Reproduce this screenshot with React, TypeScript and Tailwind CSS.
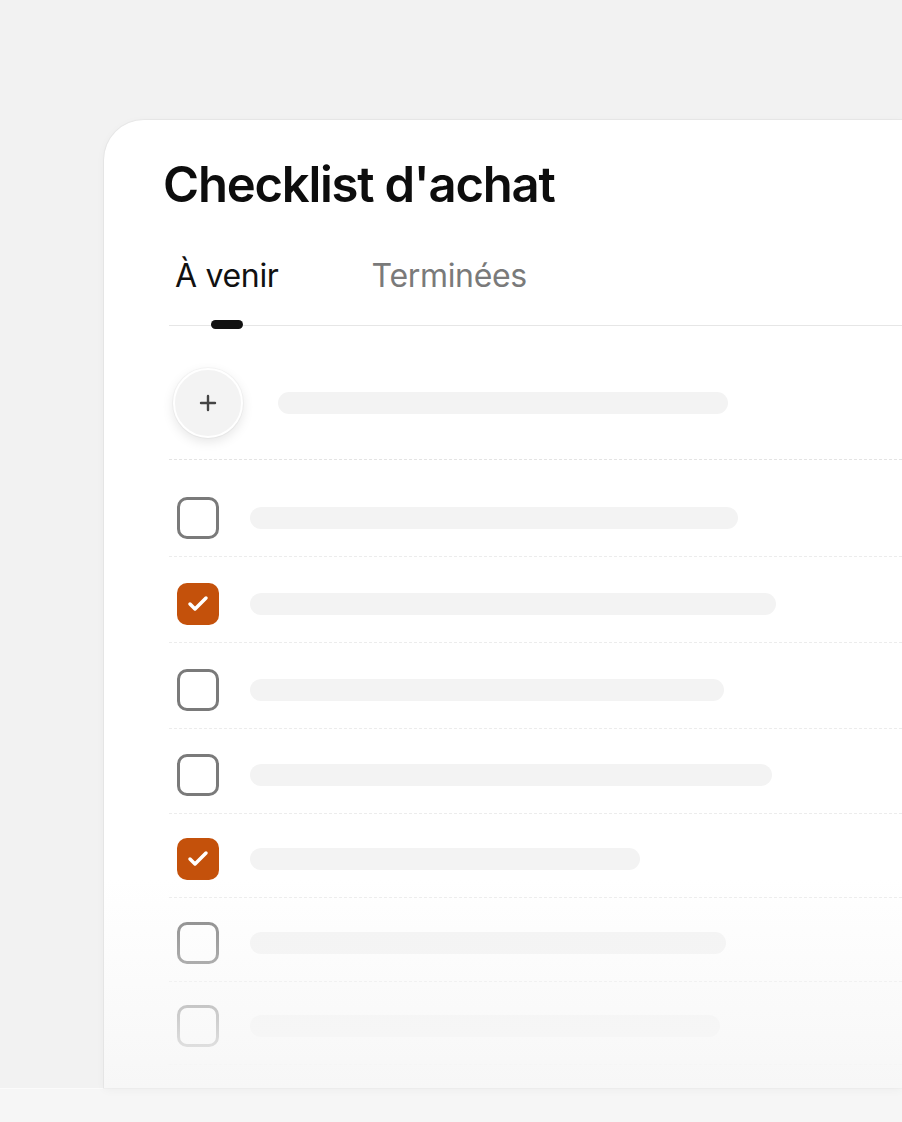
import { Plus, Check } from "lucide-react";

type Row = { checked: boolean; bar: number; pt: number };

const rows: Row[] = [
  { checked: false, bar: 488, pt: 37 },
  { checked: true, bar: 526, pt: 26 },
  { checked: false, bar: 474, pt: 26 },
  { checked: false, bar: 522, pt: 25 },
  { checked: true, bar: 390, pt: 24 },
  { checked: false, bar: 476, pt: 24 },
  { checked: false, bar: 470, pt: 23 },
];

function Checkbox({ checked }: { checked: boolean }) {
  if (checked) {
    return (
      <div className="flex h-[42px] w-[42px] shrink-0 items-center justify-center rounded-[10px] bg-[#c4510b]">
        <Check className="h-[24px] w-[24px] text-white" strokeWidth={3.5} />
      </div>
    );
  }
  return <div className="h-[42px] w-[42px] shrink-0 rounded-[10px] border-[3px] border-[#7a7a7a] bg-white" />;
}

export default function App() {
  return (
    <div
      className="h-[1122px] w-full overflow-hidden bg-[#f2f2f2] pt-[120px] pl-[104px]"
      style={{ fontFamily: "Inter, 'Noto Sans', sans-serif" }}
    >
      <div className="relative h-[968px] overflow-hidden rounded-tl-[40px] bg-white shadow-[0_0_0_1px_rgba(0,0,0,0.035),0_2px_10px_rgba(0,0,0,0.04)]">
        <h1 className="pl-[59px] pt-[35px] text-[49px] font-semibold leading-[60px] tracking-[-0.025em] text-[#0d0d0d]">
          Checklist d'achat
        </h1>

        <div className="ml-[65px] mt-[43px]">
          <div className="relative flex border-b border-[#e6e6e6] pb-[31px]">
            <div className="relative ml-[6px] text-[32px] leading-[36px] tracking-[-0.01em] text-[#111]">
              À venir
              <span className="absolute left-[36px] top-[62px] h-[9px] w-[32px] rounded-full bg-[#111]" />
            </div>
            <div className="ml-[93px] text-[32px] leading-[36px] tracking-[-0.01em] text-[#7a7a7a]">
              Terminées
            </div>
          </div>

          <div className="flex items-center border-b border-dashed border-[#e4e4e4] pb-[21px] pt-[42px]">
            <div className="ml-[4px] flex h-[70px] w-[70px] shrink-0 items-center justify-center rounded-full border-2 border-white bg-[#f3f3f3] shadow-[0_4px_12px_rgba(0,0,0,0.10),0_0_0_1px_rgba(0,0,0,0.03)]">
              <Plus className="h-[24px] w-[24px] text-[#444]" strokeWidth={2.4} />
            </div>
            <div className="ml-[35px] h-[22px] w-[450px] rounded-full bg-[#f3f3f3]" />
          </div>

          {rows.map((r, i) => (
            <div
              key={i}
              className="flex items-center border-b border-dashed border-[#ececec] pb-[17px]"
              style={{ paddingTop: r.pt }}
            >
              <div className="ml-[8px]">
                <Checkbox checked={r.checked} />
              </div>
              <div className="ml-[31px] h-[22px] rounded-full bg-[#f3f3f3]" style={{ width: r.bar }} />
            </div>
          ))}
        </div>

        <div className="pointer-events-none absolute bottom-0 left-0 right-0 h-[210px] bg-gradient-to-b from-[rgba(247,247,247,0)] via-[rgba(247,247,247,0.5)] to-[#f7f7f7]" />
      </div>
      <div className="-ml-[104px] h-[40px] border-t border-[#fbfbfb] bg-[#f6f6f6]" />
    </div>
  );
}
